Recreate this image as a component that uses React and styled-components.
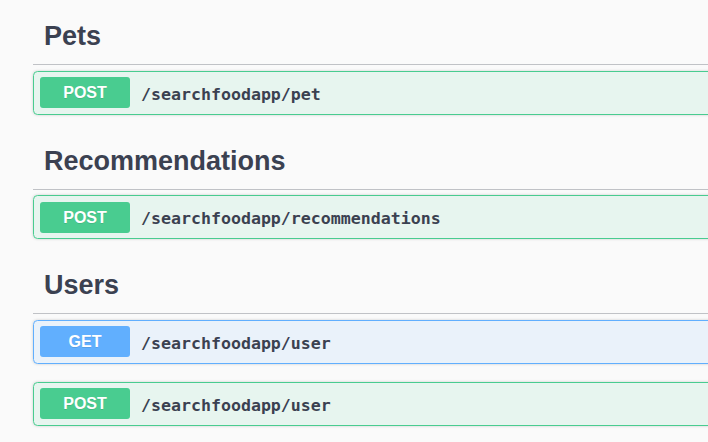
import React from "react";
import styled, { createGlobalStyle } from "styled-components";

const Global = createGlobalStyle`
  html, body { margin: 0; padding: 0; background: #fafafa; overflow: hidden; }
  body { font-family: "Liberation Sans", Arial, sans-serif; }
`;

const Page = styled.div`
  padding: 8.25px 0 0 33px;
  width: 760px;
  box-sizing: border-box;
`;

const Section = styled.section`
  display: flex;
  flex-direction: column;
`;

const Tag = styled.h3`
  margin: 0 0 5.75px;
  padding: 10px 22px 9.75px 11px;
  font-size: 27px;
  line-height: 36px;
  font-weight: 700;
  color: #3b4151;
  border-bottom: 1px solid rgba(59, 65, 81, 0.3);
`;

const palette = {
  POST: { main: "#49cc90", bg: "rgba(73, 204, 144, 0.1)" },
  GET: { main: "#61affe", bg: "rgba(97, 175, 254, 0.1)" },
};

const Block = styled.div`
  display: flex;
  align-items: center;
  height: 44px;
  box-sizing: border-box;
  padding: 0 6px;
  margin: 0 0 18px;
  border: 1px solid ${(p) => palette[p.$method].main};
  background: ${(p) => palette[p.$method].bg};
  border-radius: 4.5px;
  box-shadow: 0 0 3px rgba(0, 0, 0, 0.19);
`;

const Method = styled.span`
  flex: none;
  width: 90px;
  height: 31px;
  line-height: 31px;
  text-align: center;
  border-radius: 3px;
  background: ${(p) => palette[p.$method].main};
  color: #fff;
  font-family: "Liberation Sans", Arial, sans-serif;
  font-weight: 700;
  font-size: 16px;
  text-shadow: 0 1px 0 rgba(0, 0, 0, 0.1);
`;

const Path = styled.span`
  padding: 3px 11px 0;
  font-family: "DejaVu Sans Mono", "Liberation Mono", monospace;
  font-weight: 700;
  font-size: 16.6px;
  color: #3b4151;
`;

const data = [
  { tag: "Pets", ops: [{ m: "POST", p: "/searchfoodapp/pet" }] },
  { tag: "Recommendations", ops: [{ m: "POST", p: "/searchfoodapp/recommendations" }] },
  {
    tag: "Users",
    ops: [
      { m: "GET", p: "/searchfoodapp/user" },
      { m: "POST", p: "/searchfoodapp/user" },
    ],
  },
];

export default function App() {
  return (
    <>
      <Global />
      <Page>
        {data.map((s) => (
          <Section key={s.tag}>
            <Tag>{s.tag}</Tag>
            {s.ops.map((o, i) => (
              <Block key={i} $method={o.m}>
                <Method $method={o.m}>{o.m}</Method>
                <Path>{o.p}</Path>
              </Block>
            ))}
          </Section>
        ))}
      </Page>
    </>
  );
}
